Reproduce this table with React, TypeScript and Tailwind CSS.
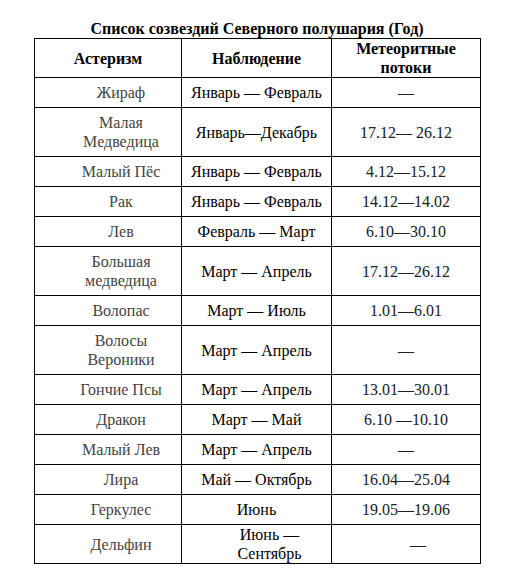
const rows: { name: string[]; obs: string[]; met: React.ReactNode; h: string; obsPad?: boolean; metPad?: boolean }[] = [
  { name: ["Жираф"], obs: ["Январь — Февраль"], met: "—", h: "h-[30px]" },
  {
    name: ["Малая", "Медведица"],
    obs: ["Январь—Декабрь"],
    met: (
      <>
        <span className="bg-[#f8f9fa]">17.12</span>— <span className="bg-[#f8f9fa]">26.12</span>
      </>
    ),
    h: "h-[49px]",
  },
  { name: ["Малый Пёс"], obs: ["Январь — Февраль"], met: "4.12—15.12", h: "h-[30px]" },
  { name: ["Рак"], obs: ["Январь — Февраль"], met: "14.12—14.02", h: "h-[30px]" },
  { name: ["Лев"], obs: ["Февраль — Март"], met: "6.10—30.10", h: "h-[30px]" },
  {
    name: ["Большая", "медведица"],
    obs: ["Март — Апрель"],
    met: (
      <>
        <span className="bg-[#f8f9fa]">17.12</span>—<span className="bg-[#f8f9fa]">26.12</span>
      </>
    ),
    h: "h-[49px]",
  },
  { name: ["Волопас"], obs: ["Март — Июль"], met: "1.01—6.01", h: "h-[30px]" },
  { name: ["Волосы", "Вероники"], obs: ["Март — Апрель"], met: "—", h: "h-[49px]" },
  { name: ["Гончие Псы"], obs: ["Март — Апрель"], met: "13.01—30.01", h: "h-[30px]" },
  { name: ["Дракон"], obs: ["Март — Май"], met: "6.10 —10.10", h: "h-[30px]" },
  { name: ["Малый Лев"], obs: ["Март — Апрель"], met: "—", h: "h-[30px]" },
  { name: ["Лира"], obs: ["Май — Октябрь"], met: "16.04—25.04", h: "h-[30px]" },
  { name: ["Геркулес"], obs: ["Июнь"], met: "19.05—19.06", h: "h-[30px]" },
  { name: ["Дельфин"], obs: ["Июнь —", "Сентябрь"], met: "—", h: "h-[39px]", obsPad: true, metPad: true },
];

export default function App() {
  return (
    <div
      className="min-h-[582px] w-[514px] bg-white pt-[19px] text-[16px] leading-[19px] text-black"
      style={{ fontFamily: '"Liberation Serif", "Times New Roman", serif' }}
    >
      <div className="ml-[34px] w-[446px]">
        <div className="text-center font-bold leading-[19px]">
          Список созвездий Северного полушария (Год)
        </div>
        <table className="w-[446px] table-fixed border-collapse border border-black">
          <colgroup>
            <col className="w-[147px]" />
            <col className="w-[150px]" />
            <col className="w-[149px]" />
          </colgroup>
          <thead>
            <tr className="h-[39px] font-bold">
              <th className="border border-black p-0 align-middle">Астеризм</th>
              <th className="border border-black p-0 align-middle">Наблюдение</th>
              <th className="border border-black p-0 align-middle">
                Метеоритные
                <br />
                потоки
              </th>
            </tr>
          </thead>
          <tbody>
            {rows.map((r, i) => (
              <tr key={i} className={r.h}>
                <td className="border border-black p-0 pl-[26px] text-center align-middle text-[#444]">
                  {r.name.map((n, j) => (
                    <div key={j}>{n}</div>
                  ))}
                </td>
                <td
                  className={
                    r.obsPad
                      ? "border border-black p-0 pl-[26px] text-center align-middle"
                      : "border border-black p-0 text-center align-middle"
                  }
                >
                  {r.obs.map((n, j) => (
                    <div key={j}>{n}</div>
                  ))}
                </td>
                <td
                  className={
                    r.metPad
                      ? "border border-black p-0 pl-[24px] text-center align-middle text-[#202122]"
                      : "border border-black p-0 text-center align-middle text-[#202122]"
                  }
                >
                  {r.met}
                </td>
              </tr>
            ))}
          </tbody>
        </table>
      </div>
    </div>
  );
}
